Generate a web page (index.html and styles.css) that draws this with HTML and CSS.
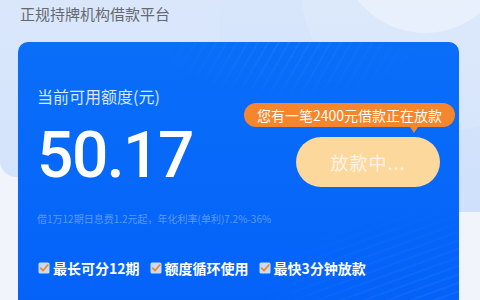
FILE: index.html
```html
<!DOCTYPE html>
<html lang="zh-CN">
<head>
    <meta charset="UTF-8">
    <meta name="viewport" content="width=device-width, initial-scale=1.0">
    <title>额度</title>
    <link rel="stylesheet" href="styles.css">
</head>
<body>
    <div class="bg">
        <div class="deco deco-left"></div>
        <div class="deco deco-right"></div>
        <div class="deco deco-ring"></div>
        <div class="deco deco-circle"></div>
    </div>

    <main class="page">
        <p class="slogan">正规持牌机构借款平台</p>

        <section class="card">
            <p class="card-label">当前可用额度(元)</p>

            <div class="card-main">
                <div class="amount">50.17</div>
                <div class="action">
                    <div class="tip">您有一笔2400元借款正在放款</div>
                    <button class="btn" type="button">放款中...</button>
                </div>
            </div>

            <p class="note">借1万12期日息费1.2元起，年化利率(单利)7.2%-36%</p>

            <ul class="features">
                <li>
                    <svg class="check" viewBox="0 0 12 12" width="12" height="12">
                        <rect x="0.5" y="0.5" width="11" height="11" rx="1.5" fill="#c9dcff"/>
                        <path d="M2.6 6.2 L5 8.6 L9.8 3" fill="none" stroke="#f08a24" stroke-width="1.8" stroke-linecap="round" stroke-linejoin="round"/>
                    </svg>
                    最长可分12期
                </li>
                <li>
                    <svg class="check" viewBox="0 0 12 12" width="12" height="12">
                        <rect x="0.5" y="0.5" width="11" height="11" rx="1.5" fill="#c9dcff"/>
                        <path d="M2.6 6.2 L5 8.6 L9.8 3" fill="none" stroke="#f08a24" stroke-width="1.8" stroke-linecap="round" stroke-linejoin="round"/>
                    </svg>
                    额度循环使用
                </li>
                <li>
                    <svg class="check" viewBox="0 0 12 12" width="12" height="12">
                        <rect x="0.5" y="0.5" width="11" height="11" rx="1.5" fill="#c9dcff"/>
                        <path d="M2.6 6.2 L5 8.6 L9.8 3" fill="none" stroke="#f08a24" stroke-width="1.8" stroke-linecap="round" stroke-linejoin="round"/>
                    </svg>
                    最快3分钟放款
                </li>
            </ul>
        </section>
    </main>
</body>
</html>
```

FILE: styles.css
```css
/* Reset */
* {
    margin: 0;
    padding: 0;
    box-sizing: border-box;
}

body {
    font-family: "Noto Sans CJK SC", "Noto Sans", sans-serif;
    background: #f1f4fb;
    overflow: hidden;
    position: relative;
    height: 300px;
}

/* Background decoration */
.bg {
    position: absolute;
    inset: 0;
    overflow: hidden;
}

.deco {
    position: absolute;
}

.deco-left {
    left: 0;
    top: 0;
    width: 300px;
    height: 177px;
    border-radius: 0 0 0 16px;
    background: linear-gradient(180deg, #dae7fb 0%, #d3e3fb 100%);
}

.deco-right {
    right: 0;
    top: 0;
    width: 260px;
    height: 212px;
    border-radius: 0 0 0 16px;
    background: linear-gradient(180deg, #d8e6fb 0%, #cfe0fb 100%);
}

.deco-ring {
    width: 300px;
    height: 300px;
    border-radius: 50%;
    left: 300px;
    top: -170px;
    background: rgba(255, 255, 255, 0.12);
}

.deco-circle {
    width: 170px;
    height: 170px;
    border-radius: 50%;
    left: 340px;
    top: -137px;
    background: rgba(255, 255, 255, 0.35);
}

/* Page */
.page {
    position: relative;
    z-index: 1;
    padding: 0 21px 0 18px;
}

.slogan {
    padding-left: 2px;
    font-size: 15px;
    line-height: 28px;
    color: #666a70;
}

/* Card */
.card {
    position: relative;
    margin-top: 14px;
    height: 258px;
    padding: 43px 19px 0;
    border-radius: 10px 10px 0 0;
    background: linear-gradient(180deg, #0a6ef9 0%, #0462f9 100%);
    overflow: hidden;
}

.card::before {
    content: "";
    position: absolute;
    inset: 0;
    background: repeating-linear-gradient(120deg, rgba(255, 255, 255, 0.05) 0 2px, transparent 2px 9px);
    -webkit-mask-image: radial-gradient(ellipse 140px 60px at 270px 0, #000 0%, transparent 100%);
    mask-image: radial-gradient(ellipse 140px 60px at 270px 0, #000 0%, transparent 100%);
}

.card::after {
    content: "";
    position: absolute;
    inset: 0;
    background: repeating-linear-gradient(160deg, rgba(255, 255, 255, 0.05) 0 2px, transparent 2px 8px);
    -webkit-mask-image: radial-gradient(ellipse 200px 90px at 420px 250px, #000 0%, transparent 100%);
    mask-image: radial-gradient(ellipse 200px 90px at 420px 250px, #000 0%, transparent 100%);
}

.card-label {
    font-size: 16px;
    line-height: 22px;
    color: #d9e7ff;
}

.card-main {
    display: flex;
    justify-content: space-between;
    align-items: flex-start;
    margin-top: 17px;
}

.amount {
    font-family: Roboto, "Liberation Sans", sans-serif;
    font-size: 64px;
    font-weight: 500;
    line-height: 64px;
    color: #fff;
    letter-spacing: -1.5px;
}

.action {
    position: relative;
    z-index: 2;
    margin-top: 13px;
}

.tip {
    position: absolute;
    right: -15px;
    bottom: calc(100% + 10px);
    white-space: nowrap;
    padding: 0 13px;
    height: 24px;
    line-height: 24px;
    font-size: 14px;
    color: #fff;
    background: #f5862b;
    border-radius: 12px;
}

.tip::after {
    content: "";
    position: absolute;
    right: 37px;
    top: 100%;
    border: 4px solid transparent;
    border-top: 6px solid #f5862b;
}

.btn {
    display: block;
    width: 144px;
    height: 50px;
    border: none;
    border-radius: 25px;
    background: #fdd89d;
    color: #fff4e4;
    font-family: "Noto Sans CJK SC", sans-serif;
    font-size: 18px;
    letter-spacing: 1px;
}

.note {
    position: relative;
    z-index: 1;
    margin-top: 24px;
    font-size: 10px;
    line-height: 14px;
    color: rgba(255, 255, 255, 0.35);
}

.features {
    position: relative;
    z-index: 1;
    display: flex;
    gap: 9px;
    margin-top: 32px;
    list-style: none;
}

.features li {
    display: flex;
    align-items: center;
    gap: 3px;
    font-size: 14px;
    font-weight: 700;
    line-height: 20px;
    color: #fff;
}

.check {
    flex: none;
    margin-left: 1px;
}
```
